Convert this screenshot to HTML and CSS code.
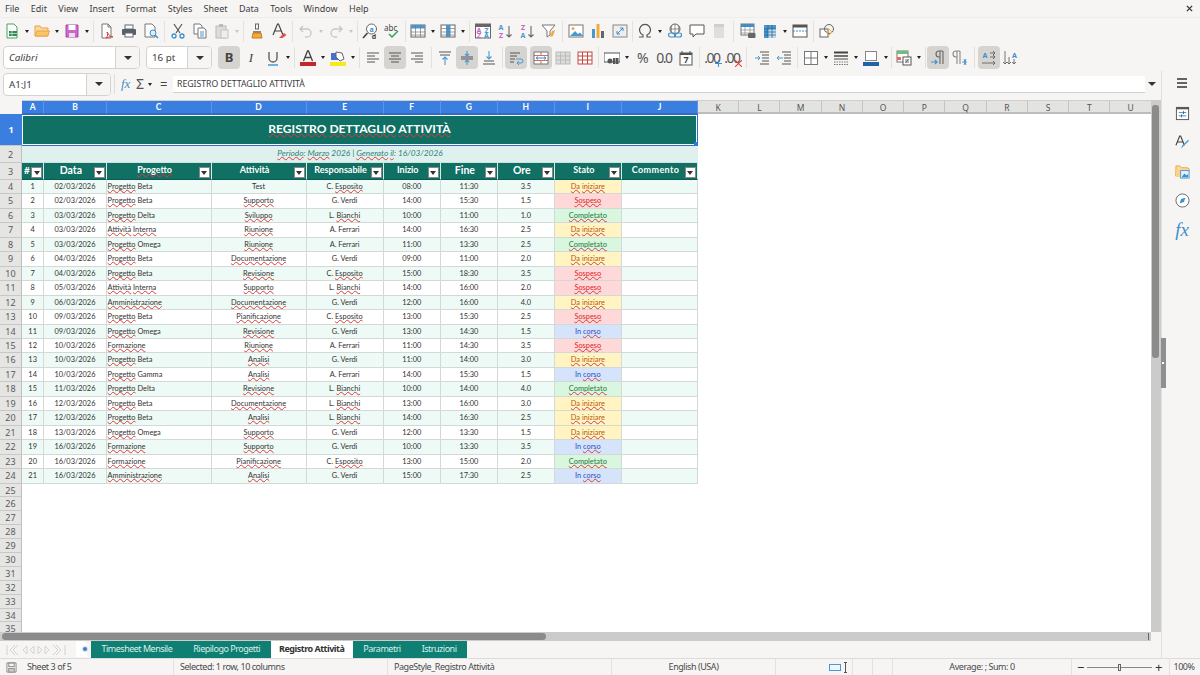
FILE: index.html
```html
<!DOCTYPE html>
<html lang="it">

<head>
    <meta charset="UTF-8">
    <title>Registro Attività - Calc</title>
    <link rel="stylesheet" href="styles.css">
</head>

<body>

    <nav class="menubar">
        <span>File</span><span>Edit</span><span>View</span><span>Insert</span><span>Format</span><span>Styles</span><span>Sheet</span><span>Data</span><span>Tools</span><span>Window</span><span>Help</span>
        <svg class="close" viewBox="0 0 8 8"><path d="M1 1l6 6M7 1l-6 6" stroke="#333" stroke-width="1.5"/></svg>
    </nav>

    <!-- Standard toolbar -->
    <div class="toolbar first">
        <button class="tb"><svg viewBox="0 0 16 16"><path d="M3 1h7l3 3v11H3z" fill="#fff" stroke="#46a35e"/><rect x="5" y="8" width="8" height="5" fill="#2f8f52"/><path d="M5 10.500h8M8 8v5" stroke="#fff" stroke-width=".6"/></svg></button><i class="arrow"></i>
        <button class="tb"><svg viewBox="0 0 16 16"><path d="M1 13V3h5l1.500 2H14v8z" fill="#fbd89b" stroke="#e7a544"/><path d="M1 13l2-5h12.500l-2 5z" fill="#fcc368" stroke="#e7a544"/></svg></button><i class="arrow"></i>
        <button class="tb"><svg viewBox="0 0 16 16"><path d="M2 2h12v12H2z" fill="#c86ac6" stroke="#a74ba8"/><rect x="4.500" y="2" width="7" height="5" fill="#fff"/><rect x="5" y="10" width="6" height="4" fill="#f2d9f2"/></svg></button><i class="arrow"></i>
        <i class="sep"></i>
        <button class="tb"><svg viewBox="0 0 16 16"><path d="M3 1h6l3 3v11H3z" fill="#fff" stroke="#777"/><path d="M9 1v3h3" fill="none" stroke="#777"/><path d="M8 9c2 3 3 5 6 5-2-1-4 0-7 1 2-2 2-4 1-6z" fill="none" stroke="#e0403a"/></svg></button>
        <button class="tb"><svg viewBox="0 0 16 16"><rect x="4" y="2" width="8" height="4" fill="#fff" stroke="#667"/><rect x="1" y="6" width="14" height="6" rx="1" fill="#55606a"/><rect x="4" y="10" width="8" height="4" fill="#fff" stroke="#667"/></svg></button>
        <button class="tb"><svg viewBox="0 0 16 16"><path d="M2 1h7l3 3v10H2z" fill="#fff" stroke="#777"/><circle cx="10" cy="10" r="3" fill="#dcecf8" stroke="#3f8fca"/><path d="M12 12l3 3" stroke="#3f8fca" stroke-width="1.500"/></svg></button>
        <i class="sep"></i>
        <button class="tb"><svg viewBox="0 0 16 16"><path d="M4 1l6 9M12 1l-6 9" stroke="#555" stroke-width="1.200"/><circle cx="4" cy="13" r="2" fill="none" stroke="#3f8fca" stroke-width="1.300"/><circle cx="12" cy="13" r="2" fill="none" stroke="#3f8fca" stroke-width="1.300"/></svg></button>
        <button class="tb"><svg viewBox="0 0 16 16"><path d="M2 1h6l2 2v8H2z" fill="#fff" stroke="#777"/><path d="M6 5h6l2 2v8H6z" fill="#fff" stroke="#777"/><path d="M8 9h4M8 11h4M8 13h4" stroke="#4a98d0"/></svg></button>
        <button class="tb"><svg viewBox="0 0 16 16"><rect x="2" y="3" width="10" height="12" fill="#dcdcda" stroke="#bbb"/><rect x="5" y="1" width="4" height="3" fill="#bbb"/><rect x="7" y="7" width="7" height="8" fill="#eee" stroke="#c4c4c4"/></svg></button><i class="arrow off"></i>
        <i class="sep"></i>
        <button class="tb"><svg viewBox="0 0 16 16"><rect x="6.500" y="1" width="3" height="5" fill="none" stroke="#666"/><path d="M4 8h8v2H4z" fill="#888"/><path d="M3 15l1-5h8l1 5z" fill="#f3a93c" stroke="#c67f1e"/></svg></button>
        <button class="tb"><svg viewBox="0 0 16 16"><path d="M2 12L6.500 1h1L12 12M4 8h6" fill="none" stroke="#444" stroke-width="1.200"/><path d="M8 15l5-5 2.500 2-4 3z" fill="#e84c4c"/></svg></button>
        <i class="sep"></i>
        <button class="tb"><svg viewBox="0 0 16 16"><path d="M5 3L2 6l3 3M2 6h7a4 4 0 0 1 0 8H7" fill="none" stroke="#c6c6c6" stroke-width="1.300"/></svg></button><i class="arrow off"></i>
        <button class="tb"><svg viewBox="0 0 16 16"><path d="M11 3l3 3-3 3M14 6H7a4 4 0 0 0 0 8h2" fill="none" stroke="#c6c6c6" stroke-width="1.300"/></svg></button><i class="arrow off"></i>
        <i class="sep thin"></i>
        <button class="tb"><svg viewBox="0 0 16 16"><circle cx="9.500" cy="6" r="5" fill="#fff" stroke="#666"/><path d="M5.500 10L1 15" stroke="#444" stroke-width="1.600"/><text x="9.500" y="8.500" class="gl" fill="#3f8fca">a</text><text x="12" y="15.500" class="gl" fill="#444">d</text></svg></button>
        <button class="tb"><svg viewBox="0 0 16 16"><text x="0" y="8" class="gl wide" fill="#444">abc</text><path d="M5 11l3 3 6-6" fill="none" stroke="#37a35a" stroke-width="1.500"/></svg></button>
        <i class="sep thin"></i>
        <button class="tb"><svg viewBox="0 0 16 16"><rect x="1" y="2" width="14" height="12" fill="#fff" stroke="#666"/><rect x="1" y="2" width="14" height="3.500" fill="#4a98d0"/><path d="M1 9h14M1 12h14M5.500 2v12M10.500 2v12" stroke="#777" stroke-width=".7"/></svg></button><i class="arrow"></i>
        <button class="tb"><svg viewBox="0 0 16 16"><rect x="1" y="2" width="14" height="12" fill="#fff" stroke="#666"/><rect x="6" y="2" width="4.500" height="12" fill="#4a98d0"/><path d="M1 5.500h14M1 9h14M1 12h14" stroke="#777" stroke-width=".7"/></svg></button><i class="arrow"></i>
        <i class="sep"></i>
        <button class="tb"><svg viewBox="0 0 16 16"><rect x=".5" y="1" width="15" height="14" fill="#fff" stroke="#666"/><rect x=".5" y="1" width="15" height="3" fill="#666"/><text x="4" y="9.500" class="gl" fill="#c563c5">A</text><text x="4" y="15" class="gl" fill="#c563c5">Z</text><text x="11.500" y="9.500" class="gl" fill="#4a98d0">Z</text><text x="11.500" y="15" class="gl" fill="#4a98d0">A</text></svg></button>
        <button class="tb"><svg viewBox="0 0 16 16"><text x="4" y="7" class="gl" fill="#4a98d0">A</text><text x="4" y="15" class="gl" fill="#c563c5">Z</text><path d="M12 3v11M9.500 11.500L12 14l2.500-2.500" fill="none" stroke="#666" stroke-width="1.100"/></svg></button>
        <button class="tb"><svg viewBox="0 0 16 16"><text x="4" y="7" class="gl" fill="#c563c5">Z</text><text x="4" y="15" class="gl" fill="#4a98d0">A</text><path d="M12 3v11M9.500 11.500L12 14l2.500-2.500" fill="none" stroke="#666" stroke-width="1.100"/></svg></button>
        <button class="tb"><svg viewBox="0 0 16 16"><path d="M1 2h13L9 8v4l-3 2V8z" fill="#fff" stroke="#777"/><path d="M9 14l2-6 3-1-2 6z" fill="#f3a93c"/></svg></button>
        <i class="sep"></i>
        <button class="tb"><svg viewBox="0 0 16 16"><rect x="1" y="2" width="14" height="12" fill="#fff" stroke="#777"/><circle cx="5" cy="5.500" r="1.500" fill="#f3a93c"/><path d="M2 13l5-5 3 3 2-1.500 3 3.500z" fill="#4a98d0"/></svg></button>
        <button class="tb"><svg viewBox="0 0 16 16"><rect x="2" y="6" width="3" height="9" fill="#4a98d0"/><rect x="6.500" y="1" width="3" height="14" fill="#f3a93c"/><rect x="11" y="8" width="3" height="7" fill="#666"/></svg></button>
        <button class="tb"><svg viewBox="0 0 16 16"><rect x="1" y="2" width="14" height="12" fill="#eee" stroke="#888"/><path d="M5 11l6-6M8 5h3v3M5 8v3h3" fill="none" stroke="#3f8fca"/></svg></button>
        <i class="sep tight"></i>
        <button class="tb"><svg viewBox="0 0 16 16"><path d="M2 14h4v-2a5.500 5.500 0 1 1 4 0v2h4" fill="none" stroke="#555" stroke-width="1.200"/></svg></button><i class="arrow"></i>
        <button class="tb"><svg viewBox="0 0 16 16"><circle cx="8" cy="6" r="5" fill="#fff" stroke="#666"/><path d="M3 6h10M8 1v10M5 2c-1 3-1 5 0 8M11 2c1 3 1 5 0 8" fill="none" stroke="#666" stroke-width=".7"/><rect x="1.500" y="10" width="7" height="4" rx="2" fill="none" stroke="#3f8fca" stroke-width="1.200"/><rect x="7.500" y="10" width="7" height="4" rx="2" fill="none" stroke="#3f8fca" stroke-width="1.200"/></svg></button>
        <button class="tb"><svg viewBox="0 0 16 16"><path d="M1 2h14v9H7l-3 3v-3H1z" fill="#fff" stroke="#555"/></svg></button>
        <button class="tb"><svg viewBox="0 0 16 16"><path d="M3 1h7l3 3v11H3z" fill="#dededc"/><path d="M10 1v3h3" fill="#c9c9c7"/><rect x="3" y="1" width="10" height="3" fill="#cfcfcd"/></svg></button>
        <i class="sep roomy"></i>
        <button class="tb"><svg viewBox="0 0 16 16"><rect x="1" y="1" width="13" height="11" fill="#fff" stroke="#777"/><rect x="1" y="1" width="13" height="3" fill="#3f8fca"/><path d="M1 7h13M1 10h13M5 1v11M10 1v11" stroke="#777" stroke-width=".6"/><rect x="8" y="10" width="7.500" height="5" rx="1" fill="#666"/></svg></button>
        <button class="tb"><svg viewBox="0 0 16 16"><rect x="2" y="2" width="12" height="13" fill="#4a98d0"/><rect x="6" y="6" width="8" height="9" fill="#bcdaf0"/><path d="M2 6h12M2 9h12M2 12h12M6 2v13M10 2v13" stroke="#14527e" stroke-width=".6"/></svg></button><i class="arrow"></i>
        <button class="tb"><svg viewBox="0 0 16 16"><rect x="1" y="2" width="14" height="12" fill="#fff" stroke="#555"/><rect x="1" y="2" width="14" height="2.500" fill="#555"/><path d="M1 8h14" stroke="#3f8fca" stroke-dasharray="2 1"/></svg></button>
        <i class="sep"></i>
        <button class="tb"><svg viewBox="0 0 16 16"><rect x="1" y="6" width="8" height="8" fill="#fff" stroke="#666"/><circle cx="10" cy="6" r="4.500" fill="none" stroke="#666"/><path d="M7 9l3-3 3 3-3 3z" fill="none" stroke="#f3a93c"/></svg></button>
    </div>

    <!-- Formatting toolbar -->
    <div class="toolbar second">
        <div class="combo font"><span class="field italic">Calibri</span><span class="drop"><i class="arrow big"></i></span></div>
        <div class="combo size"><span class="field">16 pt</span><span class="drop"><i class="arrow big"></i></span></div>
        <button class="tb on"><b class="letter">B</b></button>
        <button class="tb"><em class="letter serif">I</em></button>
        <button class="tb"><svg viewBox="0 0 16 16"><path d="M4 2v6a4 4 0 0 0 8 0V2" fill="none" stroke="#555" stroke-width="1.300"/><path d="M3 15h10" stroke="#4a98d0" stroke-width="1.500"/></svg></button><i class="arrow"></i>
        <i class="sep"></i>
        <button class="tb"><svg viewBox="0 0 16 16"><path d="M3.500 11L7.500 1h1l4 10M5.500 7.500h5" fill="none" stroke="#444" stroke-width="1.300"/><rect x="0" y="12" width="16" height="4" fill="#c4262c"/></svg></button><i class="arrow"></i>
        <button class="tb"><svg viewBox="0 0 16 16"><rect x="1" y="3" width="7" height="7" fill="#4a6fd0"/><path d="M6 2l6 1 2 6-4 2-4-4z" fill="#fff" stroke="#666"/><rect x="0" y="12" width="16" height="4" fill="#f5ea1e"/></svg></button><i class="arrow"></i>
        <i class="sep"></i>
        <button class="tb"><svg viewBox="0 0 16 16" class="lines"><path d="M2 3h12M2 6h8M2 9h12M2 12h8"/></svg></button>
        <button class="tb on"><svg viewBox="0 0 16 16" class="lines"><path d="M2 3h12M4 6h8M2 9h12M4 12h8"/></svg></button>
        <button class="tb"><svg viewBox="0 0 16 16" class="lines"><path d="M2 3h12M6 6h8M2 9h12M6 12h8"/></svg></button>
        <i class="sep wide"></i>
        <button class="tb"><svg viewBox="0 0 16 16"><path d="M2 2h12M3 5h10" stroke="#555"/><path d="M8 15V7M5.500 9.500L8 7l2.500 2.500" fill="none" stroke="#4a98d0" stroke-width="1.100"/></svg></button>
        <button class="tb on"><svg viewBox="0 0 16 16"><path d="M2 7h12M2 9h12" stroke="#555"/><path d="M8 1v5M6 4l2 2 2-2M8 15v-5M6 12l2-2 2 2" fill="none" stroke="#4a98d0" stroke-width="1.100"/></svg></button>
        <button class="tb"><svg viewBox="0 0 16 16"><path d="M2 14h12M3 11h10" stroke="#555"/><path d="M8 1v8M5.500 6.500L8 9l2.500-2.500" fill="none" stroke="#4a98d0" stroke-width="1.100"/></svg></button>
        <i class="sep"></i>
        <button class="tb on"><svg viewBox="0 0 16 16"><path d="M2 3h10M2 6h7M2 9h5M2 12h4" stroke="#555"/><path d="M8 9h5a1.500 1.500 0 0 1 0 4H9M11 11l-2 2 2 2" fill="none" stroke="#4a98d0"/></svg></button>
        <button class="tb on push"><svg viewBox="0 0 16 16"><rect x="1" y="2" width="14" height="12" fill="#fff" stroke="#777"/><path d="M1 5.500h14M1 10.500h14M8 2v3M8 11v3" stroke="#c4473c" stroke-width=".8"/><path d="M3 8h10M5 6.500L3 8l2 1.500M11 6.500L13 8l-2 1.500" fill="none" stroke="#3f8fca"/></svg></button>
        <button class="tb"><svg viewBox="0 0 16 16"><rect x="1" y="2" width="14" height="12" fill="#dcdcda" stroke="#bbb"/><path d="M1 6h14M1 10h14M5.500 2v12M10.500 2v12" stroke="#bbb"/></svg></button>
        <button class="tb"><svg viewBox="0 0 16 16"><rect x="1" y="2" width="14" height="12" fill="#fff" stroke="#c4473c"/><path d="M1 6h14M1 10h14M5.500 2v12M10.500 2v12" stroke="#c4473c"/></svg></button>
        <i class="sep"></i>
        <button class="tb"><svg viewBox="0 0 16 16"><rect x="0" y="3" width="16" height="9" fill="#fff" stroke="#555"/><circle cx="6" cy="11" r="2.500" fill="#555"/><rect x="9" y="8" width="2.500" height="6" fill="#555"/><rect x="12" y="8" width="2.500" height="6" fill="#555"/></svg></button><i class="arrow"></i>
        <button class="tb"><span class="letter light">%</span></button>
        <button class="tb"><span class="letter light">0.0</span></button>
        <button class="tb"><svg viewBox="0 0 16 16"><rect x="2" y="3" width="12" height="12" fill="#fff" stroke="#555"/><rect x="2" y="3" width="12" height="2" fill="#555"/><path d="M4 1v3M12 1v3" stroke="#555"/><text x="8" y="13" class="gl big" fill="#444">7</text></svg></button>
        <i class="sep"></i>
        <button class="tb narrow"><span class="letter light">.00</span><svg class="badge" viewBox="0 0 8 8"><path d="M4 0v8M0 4h8" stroke="#3f8fca" stroke-width="1.200"/></svg></button>
        <button class="tb narrow"><span class="letter light">.00</span><svg class="badge" viewBox="0 0 8 8"><path d="M0 0l8 8M8 0L0 8" stroke="#e0403a" stroke-width="1.200"/></svg></button>
        <i class="sep extra"></i>
        <button class="tb"><svg viewBox="0 0 16 16"><path d="M6 2h9M8 5h7M8 8h7M8 11h7M6 14h9" stroke="#555"/><path d="M1 8h5M4 6l2 2-2 2" fill="none" stroke="#4a98d0"/></svg></button>
        <button class="tb"><svg viewBox="0 0 16 16"><path d="M6 2h9M8 5h7M8 8h7M8 11h7M6 14h9" stroke="#555"/><path d="M7 8H1M3 6L1 8l2 2" fill="none" stroke="#4a98d0"/></svg></button>
        <i class="sep"></i>
        <button class="tb"><svg viewBox="0 0 16 16"><rect x="1.500" y="1.500" width="13" height="13" fill="#fff" stroke="#777"/><path d="M8 1.500v13M1.500 8h13" stroke="#777"/></svg></button><i class="arrow"></i>
        <button class="tb"><svg viewBox="0 0 16 16"><path d="M1 2.500h14" stroke="#444" stroke-width="2"/><path d="M1 6h14" stroke="#444" stroke-width="1.500"/><path d="M1 9h14" stroke="#444"/><path d="M1 12h14M1 14.500h14" stroke="#777" stroke-dasharray="1.500 1"/></svg></button><i class="arrow"></i>
        <button class="tb"><svg viewBox="0 0 16 16"><rect x="2.500" y="1.500" width="11" height="9" fill="#fff" stroke="#888"/><rect x="0" y="12" width="16" height="4" fill="#1f64a6"/></svg></button><i class="arrow"></i>
        <i class="sep tight"></i>
        <button class="tb"><svg viewBox="0 0 16 16"><rect x="1" y="1" width="11" height="11" fill="#fff" stroke="#777"/><rect x="1" y="1" width="11" height="3" fill="#6cbf7d"/><rect x="1" y="7" width="4" height="3" fill="#e86b5c"/><rect x="7" y="7" width="8" height="8" fill="#fff" stroke="#555"/><path d="M9 10h4M9 12h4M12.500 9l-3 4" stroke="#555" stroke-width=".8"/></svg></button><i class="arrow"></i>
        <i class="sep thin"></i>
        <button class="tb on"><svg viewBox="0 0 16 16"><path d="M13 1v13M10 1v13M13 1H9a3 3 0 0 0 0 6h1" fill="none" stroke="#666" stroke-width="1.100"/><path d="M1 12h6M5 10l2 2-2 2" fill="none" stroke="#3f8fca" stroke-width="1.200"/></svg></button>
        <button class="tb"><svg viewBox="0 0 16 16"><path d="M8 1v13M5 1v13M8 1H4a3 3 0 0 0 0 6h1" fill="none" stroke="#888" stroke-width="1.100"/><path d="M10 12h5M12 9l2 6M14 9l-2 6" fill="none" stroke="#3f8fca" stroke-width=".9"/></svg></button>
        <i class="sep roomy"></i>
        <button class="tb on"><svg viewBox="0 0 16 16"><text x="4" y="8" class="gl" fill="#3f8fca">A</text><path d="M9 3h5M12 1l2 2-2 2M9 7h5M12 5l2 2-2 2M1 13h13M12 11l2 2-2 2" fill="none" stroke="#555" stroke-width=".8"/></svg></button>
        <button class="tb"><svg viewBox="0 0 16 16"><text x="11.500" y="8" class="gl" fill="#3f8fca">A</text><path d="M2 1v13M0 12l2 2 2-2M6 7v7M4 12l2 2 2-2M11 9v5M9 12l2 2 2-2" fill="none" stroke="#555" stroke-width=".8"/></svg></button>
    </div>

    <div class="workarea">
        <main class="book">
            <!-- Formula bar -->
            <div class="formula">
                <div class="combo name"><span class="field">A1:J1</span><span class="drop"><i class="arrow big"></i></span></div>
                <i class="bar-sep"></i>
                <span class="fx">fx</span>
                <span class="sigma">Σ</span><i class="arrow"></i>
                <span class="equals">=</span>
                <div class="input">REGISTRO DETTAGLIO ATTIVITÀ</div>
                <i class="arrow big end"></i>
            </div>

            <div class="sheet-wrap">
                <div class="sheet">
                    <div class="row head">
                        <div class="corner"></div>
                        <div class="sel">A</div><div class="sel">B</div><div class="sel">C</div><div class="sel">D</div><div class="sel">E</div><div class="sel">F</div><div class="sel">G</div><div class="sel">H</div><div class="sel">I</div><div class="sel">J</div>
                        <div>K</div><div>L</div><div>M</div><div>N</div><div>O</div><div>P</div><div>Q</div><div>R</div><div>S</div><div>T</div><div>U</div>
                    </div>

                    <div class="rn sel">1</div>
                    <div class="title"><u>REGISTRO</u> <u>DETTAGLIO</u> <u>ATTIVITÀ</u><i class="handle"></i></div>
                    <div class="rn tall">2</div>
                    <div class="subtitle"><u>Periodo</u>: <u>Marzo</u> 2026 | <u>Generato</u> <u>il</u>: 16/03/2026</div>

                    <div class="row th">
                        <div class="rn">3</div>
                        <div class="hash">#<i class="flt"></i></div>
                        <div class="big">Data<i class="flt"></i></div>
                        <div><u>Progetto</u><i class="flt"></i></div>
                        <div>Attività<i class="flt"></i></div>
                        <div>Responsabile<i class="flt"></i></div>
                        <div>Inizio<i class="flt"></i></div>
                        <div class="big">Fine<i class="flt"></i></div>
                        <div class="big">Ore<i class="flt"></i></div>
                        <div>Stato<i class="flt"></i></div>
                        <div class="spaced">Commento<i class="flt"></i></div>
                    </div>

                    <div class="row alt"><div class="rn">4</div><div>1</div><div>02/03/2026</div><div class="l"><u>Progetto</u> Beta</div><div>Test</div><div>C. <u>Esposito</u></div><div>08:00</div><div>11:30</div><div>3.5</div><div class="todo"><u>Da</u> <u>iniziare</u></div><div></div></div>
                    <div class="row"><div class="rn">5</div><div>2</div><div>02/03/2026</div><div class="l"><u>Progetto</u> Beta</div><div><u>Supporto</u></div><div>G. Verdi</div><div>14:00</div><div>15:30</div><div>1.5</div><div class="hold"><u>Sospeso</u></div><div></div></div>
                    <div class="row alt"><div class="rn">6</div><div>3</div><div>03/03/2026</div><div class="l"><u>Progetto</u> Delta</div><div><u>Sviluppo</u></div><div>L. <u>Bianchi</u></div><div>10:00</div><div>11:00</div><div>1.0</div><div class="done"><u>Completato</u></div><div></div></div>
                    <div class="row"><div class="rn">7</div><div>4</div><div>03/03/2026</div><div class="l"><u>Attività</u> <u>Interna</u></div><div><u>Riunione</u></div><div>A. Ferrari</div><div>14:00</div><div>16:30</div><div>2.5</div><div class="todo"><u>Da</u> <u>iniziare</u></div><div></div></div>
                    <div class="row alt"><div class="rn">8</div><div>5</div><div>03/03/2026</div><div class="l"><u>Progetto</u> Omega</div><div><u>Riunione</u></div><div>A. Ferrari</div><div>11:00</div><div>13:30</div><div>2.5</div><div class="done"><u>Completato</u></div><div></div></div>
                    <div class="row"><div class="rn">9</div><div>6</div><div>04/03/2026</div><div class="l"><u>Progetto</u> Beta</div><div><u>Documentazione</u></div><div>G. Verdi</div><div>09:00</div><div>11:00</div><div>2.0</div><div class="todo"><u>Da</u> <u>iniziare</u></div><div></div></div>
                    <div class="row alt"><div class="rn">10</div><div>7</div><div>04/03/2026</div><div class="l"><u>Progetto</u> Beta</div><div><u>Revisione</u></div><div>C. <u>Esposito</u></div><div>15:00</div><div>18:30</div><div>3.5</div><div class="hold"><u>Sospeso</u></div><div></div></div>
                    <div class="row"><div class="rn">11</div><div>8</div><div>05/03/2026</div><div class="l"><u>Attività</u> <u>Interna</u></div><div><u>Supporto</u></div><div>L. <u>Bianchi</u></div><div>14:00</div><div>16:00</div><div>2.0</div><div class="hold"><u>Sospeso</u></div><div></div></div>
                    <div class="row alt"><div class="rn">12</div><div>9</div><div>06/03/2026</div><div class="l"><u>Amministrazione</u></div><div><u>Documentazione</u></div><div>G. Verdi</div><div>12:00</div><div>16:00</div><div>4.0</div><div class="todo"><u>Da</u> <u>iniziare</u></div><div></div></div>
                    <div class="row"><div class="rn">13</div><div>10</div><div>09/03/2026</div><div class="l"><u>Progetto</u> Beta</div><div><u>Pianificazione</u></div><div>C. <u>Esposito</u></div><div>13:00</div><div>15:30</div><div>2.5</div><div class="hold"><u>Sospeso</u></div><div></div></div>
                    <div class="row alt"><div class="rn">14</div><div>11</div><div>09/03/2026</div><div class="l"><u>Progetto</u> Omega</div><div><u>Revisione</u></div><div>G. Verdi</div><div>13:00</div><div>14:30</div><div>1.5</div><div class="prog">In <u>corso</u></div><div></div></div>
                    <div class="row"><div class="rn">15</div><div>12</div><div>10/03/2026</div><div class="l"><u>Formazione</u></div><div><u>Riunione</u></div><div>A. Ferrari</div><div>11:00</div><div>14:30</div><div>3.5</div><div class="hold"><u>Sospeso</u></div><div></div></div>
                    <div class="row alt"><div class="rn">16</div><div>13</div><div>10/03/2026</div><div class="l"><u>Progetto</u> Beta</div><div><u>Analisi</u></div><div>G. Verdi</div><div>11:00</div><div>14:00</div><div>3.0</div><div class="todo"><u>Da</u> <u>iniziare</u></div><div></div></div>
                    <div class="row"><div class="rn">17</div><div>14</div><div>10/03/2026</div><div class="l"><u>Progetto</u> Gamma</div><div><u>Analisi</u></div><div>A. Ferrari</div><div>14:00</div><div>15:30</div><div>1.5</div><div class="prog">In <u>corso</u></div><div></div></div>
                    <div class="row alt"><div class="rn">18</div><div>15</div><div>11/03/2026</div><div class="l"><u>Progetto</u> Delta</div><div><u>Revisione</u></div><div>L. <u>Bianchi</u></div><div>10:00</div><div>14:00</div><div>4.0</div><div class="done"><u>Completato</u></div><div></div></div>
                    <div class="row"><div class="rn">19</div><div>16</div><div>12/03/2026</div><div class="l"><u>Progetto</u> Beta</div><div><u>Documentazione</u></div><div>L. <u>Bianchi</u></div><div>13:00</div><div>16:00</div><div>3.0</div><div class="todo"><u>Da</u> <u>iniziare</u></div><div></div></div>
                    <div class="row alt"><div class="rn">20</div><div>17</div><div>12/03/2026</div><div class="l"><u>Progetto</u> Beta</div><div><u>Analisi</u></div><div>L. <u>Bianchi</u></div><div>14:00</div><div>16:30</div><div>2.5</div><div class="todo"><u>Da</u> <u>iniziare</u></div><div></div></div>
                    <div class="row"><div class="rn">21</div><div>18</div><div>13/03/2026</div><div class="l"><u>Progetto</u> Omega</div><div><u>Supporto</u></div><div>G. Verdi</div><div>12:00</div><div>13:30</div><div>1.5</div><div class="todo"><u>Da</u> <u>iniziare</u></div><div></div></div>
                    <div class="row alt"><div class="rn">22</div><div>19</div><div>16/03/2026</div><div class="l"><u>Formazione</u></div><div><u>Supporto</u></div><div>G. Verdi</div><div>10:00</div><div>13:30</div><div>3.5</div><div class="prog">In <u>corso</u></div><div></div></div>
                    <div class="row"><div class="rn">23</div><div>20</div><div>16/03/2026</div><div class="l"><u>Formazione</u></div><div><u>Pianificazione</u></div><div>C. <u>Esposito</u></div><div>13:00</div><div>15:00</div><div>2.0</div><div class="done"><u>Completato</u></div><div></div></div>
                    <div class="row alt"><div class="rn">24</div><div>21</div><div>16/03/2026</div><div class="l"><u>Amministrazione</u></div><div><u>Analisi</u></div><div>G. Verdi</div><div>15:00</div><div>17:30</div><div>2.5</div><div class="prog">In <u>corso</u></div><div></div></div>

                    <div class="rn">25</div><div class="rn">26</div><div class="rn">27</div><div class="rn">28</div><div class="rn">29</div><div class="rn">30</div><div class="rn">31</div><div class="rn">32</div><div class="rn">33</div><div class="rn">34</div><div class="rn">35</div>
                </div>
                <div class="vscroll"><div class="vthumb"></div></div>
            </div>

            <div class="hscroll"><div class="hthumb"></div><i class="hmark"></i></div>

            <div class="tabbar">
                <svg class="tabnav" viewBox="0 0 60 12"><g fill="none" stroke="#d2d2d0"><path d="M1 1v10M9 1L4 6l5 5M12 1L7 6l5 5"/><path d="M21 2l-4 4 4 4zM28 2l-4 4 4 4zM32 2l4 4-4 4zM39 2l4 4-4 4z"/><path d="M47 1l5 5-5 5M50 1l5 5-5 5M59 1v10"/></g></svg>
                <svg class="tabnew" viewBox="0 0 15 16"><path d="M1 0h8l3 3v13H1z" fill="#fff"/><circle cx="10" cy="8" r="2.500" fill="#3f7fc4" stroke="#dbe7f5"/></svg>
                <span class="tab">Timesheet Mensile</span>
                <span class="tab">Riepilogo Progetti</span>
                <span class="tab active">Registro Attività</span>
                <span class="tab">Parametri</span>
                <span class="tab">Istruzioni</span>
            </div>
        </main>

        <aside class="sidebar">
            <div class="grip"><i></i></div>
            <svg class="burger" viewBox="0 0 12 10"><path d="M1 1h10M1 5h10M1 9h10" stroke="#333" stroke-width="1.300"/></svg>
            <svg viewBox="0 0 16 16"><rect x="1.500" y="1.500" width="13" height="13" fill="#fff" stroke="#555"/><rect x="1.500" y="1.500" width="13" height="2" fill="#555"/><path d="M4 7h8M4 10.500h8" stroke="#3f8fca"/><path d="M9 5.500v3M7 9v3" stroke="#555"/></svg>
            <svg viewBox="0 0 16 16"><path d="M1 11L5 1h1l4 10M2.500 7.500h6" fill="none" stroke="#444" stroke-width="1.200"/><path d="M6 15l2-4 6-6 1 1-6 6z" fill="#4a98d0"/></svg>
            <svg viewBox="0 0 16 16"><path d="M1 13V2h4l2 2h6l2 1v3H1z" fill="#fbd89b" stroke="#e7a544"/><path d="M1 6h14v8H1z" fill="#fcd28b"/><rect x="6" y="7" width="9" height="8" fill="#e6f0f8" stroke="#4a98d0"/><path d="M7 14l3-4 2 2 2-1v3z" fill="#3f8fca"/></svg>
            <svg viewBox="0 0 16 16"><circle cx="8" cy="8" r="7" fill="#fff" stroke="#666"/><path d="M11 5L9.500 9.500 5 11l1.500-4.500z" fill="#3f8fca"/></svg>
            <span class="side-fx">fx</span>
        </aside>
    </div>

    <footer class="statusbar">
        <div class="st st-sheet"><svg viewBox="0 0 12 12"><path d="M1 1h10v10H1z" fill="none" stroke="#888"/><rect x="3" y="1" width="6" height="4" fill="none" stroke="#888"/><rect x="3" y="7" width="6" height="4" fill="#ccc" stroke="#888"/></svg>Sheet 3 of 5</div>
        <div class="st">Selected: 1 row, 10 columns</div>
        <div class="st">PageStyle_Registro Attività</div>
        <div class="st mid">English (USA)</div>
        <div class="st mid end-icons"><i class="sel-box"></i><i class="sel-cur"></i></div>
        <div class="st"></div>
        <div class="st"></div>
        <div class="st mid">Average: ; Sum: 0</div>
        <div class="st st-zoom"><span>−</span><i class="slider"><i></i></i><span>+</span></div>
        <div class="st mid">100%</div>
    </footer>

</body>

</html>
```

FILE: styles.css
```css
* {
    box-sizing: border-box;
}

body {
    margin: 0;
    width: 1200px;
    height: 675px;
    overflow: hidden;
    display: flex;
    flex-direction: column;
    background: #f6f5f4;
    color: #3d3d3d;
    font-family: "Noto Sans", sans-serif;
    font-size: 9.5px;
}

i {
    display: block;
}

/* Menu */
.menubar {
    height: 17px;
    flex: none;
    display: flex;
    align-items: center;
    gap: 11.400px;
    padding-left: 5px;
    font-size: 9px;
    position: relative;
}

.close {
    width: 7px;
    height: 7px;
    position: absolute;
    right: 7px;
    top: 5px;
}

/* Toolbars */
.toolbar {
    flex: none;
    display: flex;
    align-items: center;
}

.toolbar.first {
    height: 27px;
    padding-left: 1px;
    border-top: 1px solid #eeedeb;
}

.toolbar.second {
    height: 27px;
    padding-left: 3px;
}

.tb {
    width: 22px;
    height: 23px;
    flex: none;
    padding: 0;
    border: none;
    background: none;
    border-radius: 4px;
    display: flex;
    align-items: center;
    justify-content: center;
    position: relative;
    color: #444;
}

.tb.on {
    background: #d6d4d1;
}

.tb.push {
    margin-left: 3px;
}

.tb.narrow {
    width: 20px;
}

.tb svg {
    width: 16px;
    height: 16px;
}

.tb svg.badge {
    width: 7px;
    height: 7px;
    position: absolute;
    right: 0;
    bottom: 2px;
}

.lines path {
    stroke: #555;
    fill: none;
}

.gl {
    font: 700 7px "Noto Sans", sans-serif;
    text-anchor: middle;
}

.gl.wide {
    font-size: 8px;
    font-weight: 400;
    text-anchor: start;
}

.gl.big {
    font-size: 9px;
}

.letter {
    font-size: 13px;
    line-height: 1;
    font-family: "Noto Sans", sans-serif;
}

.letter.serif {
    font-family: "Liberation Serif", serif;
}

.letter.light {
    font-size: 14px;
    letter-spacing: -1.500px;
    color: #555;
}

.arrow {
    width: 8px;
    flex: none;
    display: flex;
    justify-content: center;
}

.arrow::after {
    content: "";
    border-left: 2.500px solid transparent;
    border-right: 2.500px solid transparent;
    border-top: 3px solid #222;
}

.arrow.off::after {
    border-top-color: #c6c6c6;
}

.arrow.big::after {
    border-left-width: 4px;
    border-right-width: 4px;
    border-top-width: 4px;
    border-top-color: #333;
}

.sep {
    width: 5px;
    height: 21px;
    flex: none;
    display: flex;
    justify-content: center;
}

.sep::after {
    content: "";
    width: 1px;
    background: #e2e1de;
}

.sep.wide {
    width: 6px;
}

.sep.thin {
    width: 4px;
}

.sep.tight {
    width: 3px;
}

.sep.roomy {
    width: 7px;
}

.sep.extra {
    width: 9px;
}

/* Combo boxes */
.combo {
    height: 23px;
    flex: none;
    display: flex;
    background: #fff;
    border: 1px solid #d4d2cf;
    border-radius: 4px;
    overflow: hidden;
    font-size: 9.800px;
}

.combo .field {
    flex: 1;
    padding-left: 5px;
    line-height: 21px;
}

.italic {
    font-style: italic;
}

.combo .drop {
    width: 24px;
    flex: none;
    display: flex;
    align-items: center;
    justify-content: center;
    background: #f6f5f4;
    border-left: 1px solid #d4d2cf;
}

.combo .arrow {
    width: 8px;
}

.combo.font {
    width: 137px;
    margin-right: 6px;
}

.combo.size {
    width: 66px;
    margin-right: 6px;
}

.combo.name {
    width: 108px;
}

/* Main area */
.workarea {
    flex: 1;
    min-height: 0;
    display: flex;
}

.book {
    width: 1161px;
    flex: none;
    display: flex;
    flex-direction: column;
}

.formula {
    height: 29px;
    flex: none;
    display: flex;
    align-items: center;
    padding-left: 3px;
    padding-bottom: 3px;
}

.bar-sep {
    width: 1px;
    height: 20px;
    background: #dfdedb;
    margin: 0 6px 0 3px;
}

.fx {
    width: 14px;
    font: italic 13px "Liberation Serif", serif;
    color: #3f8fca;
}

.sigma {
    font-size: 14px;
    line-height: 1;
    margin-left: 1px;
    width: 10px;
    color: #555;
}

.equals {
    font-size: 13px;
    line-height: 1;
    width: 10px;
    margin-left: 6px;
    color: #444;
}

.input {
    width: 972px;
    height: 17px;
    background: #fff;
    border-bottom: 1px solid #d4d2cf;
    margin-left: 3px;
    padding-left: 4px;
    font-size: 8.700px;
    line-height: 16px;
}

.arrow.end {
    margin-left: 3px;
}

.sheet-wrap {
    flex: 1;
    min-height: 0;
    display: flex;
}

/* Sheet grid */
.sheet {
    width: 1151px;
    flex: none;
    overflow: hidden;
    background: #fff;
    display: grid;
    grid-template-columns: 22px 22.300px 62.300px 105px 95px 77px 57.300px 57px 56.800px 67.300px 76px repeat(11, 41.250px);
    grid-template-rows: 14px 32px 17px 17px repeat(21, 14.460px) repeat(11, 13.900px);
    font-family: Lato, sans-serif;
    font-size: 7.400px;
    color: #333;
}

.row {
    display: contents;
}

.row > div {
    text-align: center;
    line-height: 14px;
    white-space: nowrap;
    border-right: 1px solid #d3d9d7;
    border-bottom: 1px solid #d3d9d7;
}

.row.alt > div {
    background: #eefaf6;
}

.row > div.l {
    text-align: left;
    padding-left: 1px;
}

u {
    text-decoration: underline wavy #dd3b3b .7px;
    text-decoration-skip-ink: none;
    text-underline-offset: 0;
}

/* Headers */
.rn,
.row > .rn {
    grid-column: 1;
    background: #e5e5e3;
    color: #5a5a5a;
    font-family: "Noto Sans", sans-serif;
    font-size: 9px;
    text-align: center;
    line-height: 14px;
    border-right: 1px solid #bfbfbd;
    border-bottom: 1px solid #c8c8c6;
}

.rn.tall {
    line-height: 17px;
}

.row.alt > .rn {
    background: #e5e5e3;
}

.row.head > div {
    background: #e3e3e1;
    color: #555;
    font-family: "Noto Sans", sans-serif;
    font-size: 8.500px;
    line-height: 13px;
    border-right: 1px solid #c4c4c2;
    border-bottom: 2px solid #bdbdbb;
    border-top: 1px solid #cfcfcd;
}

.row.head > .corner {
    background: #f6f5f4;
    border: none;
}

.row.head > .sel {
    background: #3a7edf;
    color: #fff;
    font-weight: 700;
    font-family: Lato, sans-serif;
    border-right: 1px solid #5b95e6;
    border-bottom: 1px solid #2d6bc5;
}

.rn.sel {
    background: #3a7edf;
    color: #fff;
    font-weight: 700;
    line-height: 32px;
    border-right: none;
}

.title {
    grid-column: 2 / 12;
    position: relative;
    background: #0f7063;
    color: #fff;
    font-weight: 700;
    font-size: 12.100px;
    line-height: 28px;
    text-align: center;
    box-shadow: inset 0 0 0 1px #fff;
    border: 1px solid #2c6fc9;
    border-left: none;
}

.title u {
    text-decoration-thickness: 1px;
}

.handle {
    width: 4px;
    height: 4px;
    background: #2c78e0;
    position: absolute;
    right: -1px;
    bottom: -1px;
}

.subtitle {
    grid-column: 2 / 12;
    background: #dff1ee;
    color: #2e8478;
    font-style: italic;
    font-size: 8.300px;
    line-height: 15px;
    text-align: center;
    border-bottom: 1px solid #cfe2de;
}

.row.th > div {
    background: #0f7063;
    color: #fff;
    font-weight: 700;
    font-size: 9px;
    line-height: 14px;
    border-right: 1px solid #d9ece8;
    border-bottom: 1px solid #0b5a50;
    padding-right: 8px;
    position: relative;
}

.row.th > .big {
    font-size: 10.500px;
}

.row.th > .spaced {
    letter-spacing: .4px;
}

.row.th > .hash {
    text-align: left;
    padding-left: 2px;
    font-size: 10px;
}

.row.th > .rn {
    background: #e5e5e3;
    color: #5a5a5a;
    font-weight: 400;
    line-height: 17px;
    padding-right: 0;
    border-right: 1px solid #bfbfbd;
    border-bottom: 1px solid #c8c8c6;
    font-size: 9px;
}

.flt {
    width: 11px;
    height: 11px;
    position: absolute;
    right: 1px;
    bottom: 1px;
    background: #fff;
    border: 1px solid #888;
    display: flex;
    align-items: center;
    justify-content: center;
}

.flt::after {
    content: "";
    border-left: 3.500px solid transparent;
    border-right: 3.500px solid transparent;
    border-top: 4px solid #333;
}

/* Stato colours */
.row > .todo,
.row.alt > .todo {
    background: #fff4c2;
    color: #b85a10;
}

.row > .hold,
.row.alt > .hold {
    background: #ffd9d9;
    color: #e02626;
}

.row > .done,
.row.alt > .done {
    background: #d9f6de;
    color: #1c7a3e;
}

.row > .prog,
.row.alt > .prog {
    background: #d5e4fb;
    color: #2b50c2;
}

/* Scrollbars */
.vscroll {
    width: 10px;
    flex: none;
    background: #cbcbcb;
    padding: 5px 2px 0 1px;
}

.vthumb {
    height: 253px;
    background: #8b8b8b;
    border-radius: 3px;
}

.hscroll {
    height: 9px;
    flex: none;
    width: 1151px;
    background: #cbcbcb;
    padding: 1px 0 1px 2px;
    position: relative;
}

.hthumb {
    width: 544px;
    height: 100%;
    background: #8b8b8b;
    border-radius: 4px;
}

.hmark {
    width: 1px;
    height: 7px;
    background: #666;
    position: absolute;
    right: 2px;
    top: 1px;
}

/* Sheet tabs */
.tabbar {
    height: 17px;
    flex: none;
    display: flex;
    align-items: stretch;
    padding-left: 6px;
}

.tabnav {
    width: 60px;
    height: 12px;
    align-self: center;
    margin-right: 9px;
}

.tabnew {
    width: 15px;
    height: 16px;
    margin-right: 1px;
}

.tab {
    background: #0f7f73;
    color: #d9efeb;
    font-size: 9px;
    letter-spacing: -.5px;
    line-height: 16px;
    padding: 0 10.500px;
}

.tab.active {
    background: #fff;
    color: #333;
    font-weight: 700;
    padding: 0 8.500px;
}

/* Sidebar */
.sidebar {
    flex: 1;
    position: relative;
    display: flex;
    flex-direction: column;
    align-items: center;
    padding: 7px 0 0 2px;
    gap: 14px;
    border-left: 1px solid #e2e1de;
}

.sidebar svg {
    width: 15px;
    height: 15px;
    flex: none;
}

.sidebar svg.burger {
    width: 12px;
    height: 10px;
    margin-bottom: 4px;
}

.side-fx {
    font: italic 19px "Liberation Serif", serif;
    line-height: 16px;
    color: #3f8fca;
}

.grip {
    width: 5px;
    height: 50px;
    background: #8f8f8f;
    position: absolute;
    left: -1px;
    top: 267px;
}

.grip i {
    width: 2px;
    height: 2px;
    background: #fff;
    margin: 24px 0 0 1px;
}

/* Status bar */
.statusbar {
    height: 17px;
    flex: none;
    display: grid;
    grid-template-columns: 174px 214px 224px 164px 77px 20px 20px 179px 98px 28px;
    border-top: 1px solid #dddcda;
    font-size: 9px;
    letter-spacing: -.45px;
    line-height: 16px;
    color: #4a4a4a;
}

.st {
    border-right: 1px solid #e2e1de;
    padding-left: 6px;
    white-space: nowrap;
}

.st:last-child {
    border-right: none;
}

.st-sheet {
    display: flex;
    align-items: center;
    gap: 10px;
}

.st-sheet svg {
    width: 11px;
    height: 11px;
}

.mid {
    display: flex;
    justify-content: center;
    align-items: center;
    padding: 0;
}

.end-icons {
    justify-content: flex-end;
    padding-right: 5px;
}

.sel-box {
    width: 12px;
    height: 7px;
    border: 1px solid #4a98d0;
    background: #eef6fb;
}

.sel-cur {
    width: 3px;
    height: 11px;
    margin-left: 3px;
    border-top: 1px solid #555;
    border-bottom: 1px solid #555;
    background: linear-gradient(#555, #555) center / 1px 100% no-repeat;
}

.st-zoom {
    display: flex;
    align-items: center;
    gap: 3px;
    padding: 0 0 0 5px;
    font-size: 13px;
    color: #333;
}

.slider {
    width: 65px;
    height: 1px;
    background: #888;
    position: relative;
}

.slider i {
    width: 3px;
    height: 7px;
    border: 1px solid #666;
    background: #eee;
    position: absolute;
    left: 31px;
    top: -3px;
}
```
